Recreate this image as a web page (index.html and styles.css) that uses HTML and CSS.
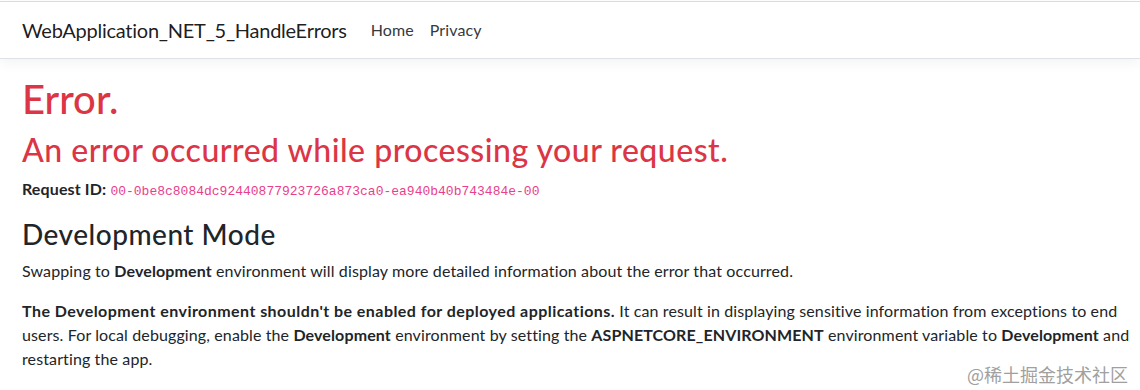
FILE: index.html
```html
<!DOCTYPE html>
<html lang="en">
<head>
<meta charset="utf-8">
<title>Error - WebApplication_NET_5_HandleErrors</title>
<link rel="stylesheet" href="styles.css">
</head>
<body>
<header class="site-header">
  <nav class="navbar">
    <a class="navbar-brand" href="#">WebApplication_NET_5_HandleErrors</a>
    <ul class="nav-list">
      <li><a class="nav-link" href="#">Home</a></li>
      <li><a class="nav-link" href="#">Privacy</a></li>
    </ul>
  </nav>
</header>
<main class="container">
  <h1 class="text-danger">Error.</h1>
  <h2 class="text-danger">An error occurred while processing your request.</h2>
  <p><strong>Request ID:</strong> <code>00-0be8c8084dc92440877923726a873ca0-ea940b40b743484e-00</code></p>
  <h3>Development Mode</h3>
  <p>Swapping to <strong>Development</strong> environment will display more detailed information about the error that occurred.</p>
  <p><strong class="warning-lead">The Development environment shouldn't be enabled for deployed applications.</strong> It can result in displaying sensitive information from exceptions to end users. For local debugging, enable the <strong>Development</strong> environment by setting the <strong>ASPNETCORE_ENVIRONMENT</strong> environment variable to <strong>Development</strong> and restarting the app.</p>
</main>
<div class="watermark">@稀土掘金技术社区</div>
</body>
</html>
```
FILE: styles.css
```css
html, body {
  margin: 0;
  padding: 0;
  background: #fff;
}
body {
  font-family: "Lato", "Noto Sans", sans-serif;
  font-size: 16px;
  line-height: 1.5;
  color: #212529;
  position: relative;
  min-height: 390px;
  overflow: hidden;
}
.site-header {
  padding-top: 1px;
  margin-bottom: 16px;
}
.navbar {
  display: flex;
  align-items: center;
  padding: 0 22px;
  border-top: 1px solid #dcdcdc;
  border-bottom: 1px solid #dee2e6;
  box-shadow: 0 4px 12px rgba(0, 0, 0, 0.05);
  background: #fff;
  box-sizing: border-box;
  height: 58px;
}
.navbar-brand {
  font-size: 20px;
  line-height: 30px;
  letter-spacing: -0.25px;
  color: rgba(0, 0, 0, 0.9);
  text-decoration: none;
  margin-right: 16px;
}
.nav-list {
  display: flex;
  list-style: none;
  margin: 0;
  padding: 0;
}
.nav-link {
  display: block;
  padding: 8px;
  color: #343a40;
  text-decoration: none;
  font-size: 16px;
  letter-spacing: 0.1px;
}
.container {
  padding: 0 5px 0 22px;
}
h1, h2, h3 {
  margin: 0 0 8px;
  font-weight: 500;
  line-height: 1.2;
}
h1 { font-size: 40px; }
h2 { font-size: 32px; letter-spacing: 0.5px; }
h3 { font-size: 28px; letter-spacing: 0.5px; }
p {
  margin: 0 0 16px;
  letter-spacing: 0.12px;
}
strong { font-weight: 700; }
.warning-lead { letter-spacing: 0.45px; }
.text-danger { color: #dc3545; }
code {
  font-family: "Liberation Mono", "DejaVu Sans Mono", monospace;
  font-size: 13px;
  letter-spacing: 0;
  color: #e83e8c;
}
.watermark {
  position: absolute;
  right: 12px;
  bottom: 7px;
  font-family: "Noto Sans CJK SC", sans-serif;
  font-size: 18px;
  color: #a0a0a0;
  line-height: 1;
}
```
